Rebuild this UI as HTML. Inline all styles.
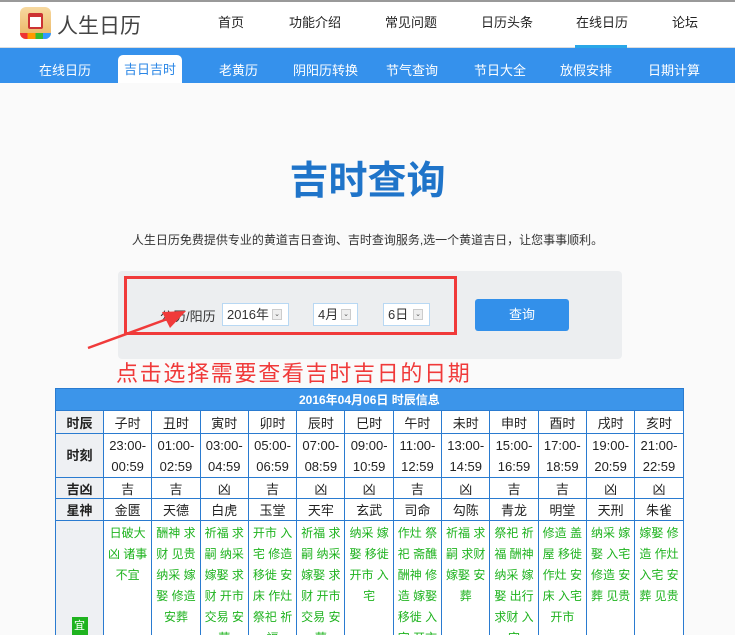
<!DOCTYPE html><html><head><meta charset="utf-8"><style>
*{margin:0;padding:0;box-sizing:border-box}
html,body{width:735px;height:635px;overflow:hidden}
body{background:#fafafa;font-family:"Liberation Sans","Noto Sans CJK SC",sans-serif;position:relative;font-size:12px;color:#333}
.top{position:absolute;left:0;top:0;width:735px;height:48px;background:#fff;border-top:2px solid #999;border-bottom:1px solid #ddd}
.logo{position:absolute;left:20px;top:5px;width:31px;height:32px;border-radius:6px;background:linear-gradient(#f7d9a0,#eab460);overflow:hidden}
.logo:after{content:"";position:absolute;left:0;bottom:0;width:31px;height:6px;background:linear-gradient(90deg,#e33 0 25%,#f90 25% 50%,#3b3 50% 75%,#39f 75%)}
.logo i{position:absolute;left:8px;top:6px;width:15px;height:16px;background:#fff;border:2px solid #c33;border-top-width:4px;border-radius:2px}
.brand{position:absolute;left:57px;top:8px;font-size:21px;color:#444}
.tn{position:absolute;top:10px;font-size:13px;color:#222}
.ul{position:absolute;left:575px;top:43px;width:52px;height:3px;background:#2aa7e8}
.bar{position:absolute;left:0;top:48px;width:735px;height:35px;background:#3591ec}
.bn{position:absolute;top:12px;font-size:13px;color:#fff}
.act{position:absolute;left:118px;top:55px;width:64px;height:28px;background:#fff;border-radius:5px 5px 0 0;color:#2a86e6;font-size:13px;text-align:center;line-height:30px}
h1{position:absolute;left:0;width:735px;top:150px;text-align:center;font-size:39px;color:#1f74c9;font-weight:bold}
.sub{position:absolute;left:0;width:735px;top:231px;text-align:center;font-size:12px;color:#333}
.form{position:absolute;left:118px;top:271px;width:504px;height:88px;background:#eceef0;border-radius:4px}
.red{position:absolute;left:124px;top:276px;width:333px;height:59px;border:3px solid #f03a3a}
.sel{position:absolute;top:303px;height:23px;background:#fff;border:1px solid #b8d8f3;font-size:13px;line-height:21px;padding-left:4px}
.sel b{position:absolute;right:6px;top:5px;width:10px;height:11px;border:1px solid #ccc;background:#eee;font-size:7px;line-height:9px;text-align:center;font-weight:normal;color:#555}
.btn{position:absolute;left:475px;top:299px;width:94px;height:32px;background:#3390ea;border-radius:3px;color:#fff;font-size:13px;text-align:center;line-height:32px}
.tip{position:absolute;left:116px;top:356px;font-size:22px;letter-spacing:1.7px;color:#f03a3a}
table{position:absolute;left:55px;top:388px;width:628px;border-collapse:collapse;table-layout:fixed;font-size:13px}
td{border:1px solid #2a7bd0;text-align:center;vertical-align:middle;color:#222;background:#fff}
th{background:#3c95ea;color:#fff;border:1px solid #2a7bd0;height:22px;font-size:12px}
td.h{background:#eef0f3;color:#222;font-weight:bold}
.g td{color:#1fb31f;vertical-align:top;line-height:21px;padding:2px 1px 0;font-size:12px}
</style></head><body>
<div class="top"><div class="logo"><i></i></div><div class="brand">人生日历</div>
<div class="tn" style="left:218px">首页</div><div class="tn" style="left:289px">功能介绍</div><div class="tn" style="left:385px">常见问题</div><div class="tn" style="left:481px">日历头条</div><div class="tn" style="left:576px">在线日历</div><div class="tn" style="left:672px">论坛</div><div class="ul"></div></div>
<div class="bar"><div class="bn" style="left:39px">在线日历</div><div class="bn" style="left:219px">老黄历</div><div class="bn" style="left:293px">阴阳历转换</div><div class="bn" style="left:386px">节气查询</div><div class="bn" style="left:474px">节日大全</div><div class="bn" style="left:560px">放假安排</div><div class="bn" style="left:648px">日期计算</div></div>
<div class="act">吉日吉时</div>
<h1>吉时查询</h1>
<div class="sub">人生日历免费提供专业的黄道吉日查询、吉时查询服务,选一个黄道吉日，让您事事顺利。</div>
<div class="form"></div>
<div style="position:absolute;left:160px;top:306px;font-size:13px">公历/阳历</div>
<div class="sel" style="left:222px;width:67px">2016年<b>⌄</b></div>
<div class="sel" style="left:313px;width:45px">4月<b>⌄</b></div>
<div class="sel" style="left:383px;width:47px">6日<b>⌄</b></div>
<div class="red"></div>
<div class="btn">查询</div>
<svg style="position:absolute;left:0;top:0" width="735" height="635"><line x1="88" y1="348" x2="170" y2="318" stroke="#f03a3a" stroke-width="2.5"/><polygon points="186,311 162,312 170,328" fill="#f03a3a"/></svg>
<div class="tip">点击选择需要查看吉时吉日的日期</div>
<table>
<colgroup><col style="width:48px"><col span="12" style="width:48.3px"></colgroup>
<tr><th colspan="13">2016年04月06日 时辰信息</th></tr>
<tr style="height:23px"><td class="h">时辰</td><td>子时</td><td>丑时</td><td>寅时</td><td>卯时</td><td>辰时</td><td>巳时</td><td>午时</td><td>未时</td><td>申时</td><td>酉时</td><td>戌时</td><td>亥时</td></tr>
<tr style="height:44px;line-height:21px"><td class="h">时刻</td><td>23:00-<br>00:59</td><td>01:00-<br>02:59</td><td>03:00-<br>04:59</td><td>05:00-<br>06:59</td><td>07:00-<br>08:59</td><td>09:00-<br>10:59</td><td>11:00-<br>12:59</td><td>13:00-<br>14:59</td><td>15:00-<br>16:59</td><td>17:00-<br>18:59</td><td>19:00-<br>20:59</td><td>21:00-<br>22:59</td></tr>
<tr style="height:21px"><td class="h">吉凶</td><td>吉</td><td>吉</td><td>凶</td><td>吉</td><td>凶</td><td>凶</td><td>吉</td><td>凶</td><td>吉</td><td>吉</td><td>凶</td><td>凶</td></tr>
<tr style="height:22px"><td class="h">星神</td><td>金匮</td><td>天德</td><td>白虎</td><td>玉堂</td><td>天牢</td><td>玄武</td><td>司命</td><td>勾陈</td><td>青龙</td><td>明堂</td><td>天刑</td><td>朱雀</td></tr>
<tr class="g" style="height:120px"><td class="h" style="padding-top:94px"><span style="display:inline-block;background:#1fb31f;color:#fff;width:16px;height:18px;line-height:18px;font-size:11px;font-weight:normal">宜</span></td>
<td>日破大凶 诸事不宜</td><td>酬神 求财 见贵纳采 嫁娶 修造安葬</td><td>祈福 求嗣 纳采嫁娶 求财 开市交易 安葬</td><td>开市 入宅 修造移徙 安床 作灶祭祀 祈福</td><td>祈福 求嗣 纳采嫁娶 求财 开市交易 安葬</td><td>纳采 嫁娶 移徙开市 入宅</td><td>作灶 祭祀 斋醮酬神 修造 嫁娶移徙 入宅 开市</td><td>祈福 求嗣 求财嫁娶 安葬</td><td>祭祀 祈福 酬神纳采 嫁娶 出行求财 入宅</td><td>修造 盖屋 移徙作灶 安床 入宅开市</td><td>纳采 嫁娶 入宅修造 安葬 见贵</td><td>嫁娶 修造 作灶入宅 安葬 见贵</td></tr>
</table>
</body></html>
